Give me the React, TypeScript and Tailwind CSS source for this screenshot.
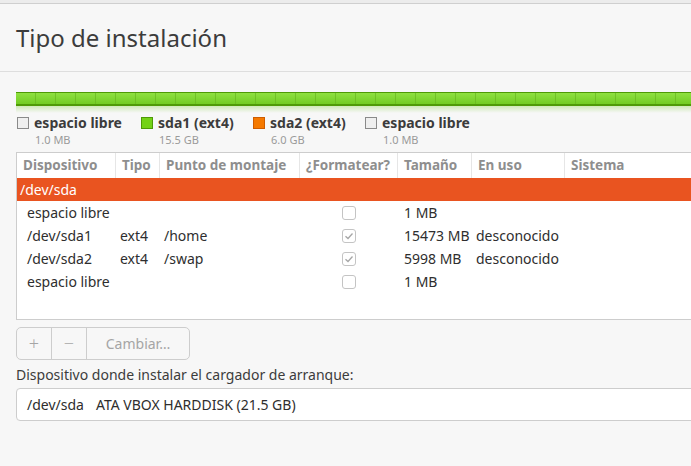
import React from 'react';

type Row = {
  dev: string;
  type?: string;
  mount?: string;
  format: boolean;
  size: string;
  used?: string;
};

const ROWS: Row[] = [
  { dev: 'espacio libre', format: false, size: '1 MB' },
  { dev: '/dev/sda1', type: 'ext4', mount: '/home', format: true, size: '15473 MB', used: 'desconocido' },
  { dev: '/dev/sda2', type: 'ext4', mount: '/swap', format: true, size: '5998 MB', used: 'desconocido' },
  { dev: 'espacio libre', format: false, size: '1 MB' },
];

const COLS = [
  { label: 'Dispositivo', w: 'w-[99px]' },
  { label: 'Tipo', w: 'w-[44px]' },
  { label: 'Punto de montaje', w: 'w-[140px]' },
  { label: '¿Formatear?', w: 'w-[98px]' },
  { label: 'Tamaño', w: 'w-[74px]' },
  { label: 'En uso', w: 'w-[93px]' },
  { label: 'Sistema', w: 'flex-1' },
];

const LEGEND = [
  { name: 'espacio libre', size: '1.0 MB', box: 'bg-[#efefef] border-[#8a8a8a]', w: 'w-[124px]' },
  { name: 'sda1 (ext4)', size: '15.5 GB', box: 'bg-[#73d216] border-[#4e9a06]', w: 'w-[112px]' },
  { name: 'sda2 (ext4)', size: '6.0 GB', box: 'bg-[#f57900] border-[#ce5c00]', w: 'w-[112px]' },
  { name: 'espacio libre', size: '1.0 MB', box: 'bg-[#efefef] border-[#8a8a8a]', w: 'w-[124px]' },
];

function Check({ checked }: { checked: boolean }) {
  return (
    <div className="w-[14px] h-[14px] rounded-[3px] border border-[#c4c4c4] bg-white flex items-center justify-center">
      {checked && (
        <svg width="10" height="10" viewBox="0 0 10 10">
          <path d="M1.5 5.2 L4 7.5 L8.5 2.5" fill="none" stroke="#a6a6a6" strokeWidth="1.3" />
        </svg>
      )}
    </div>
  );
}

const App: React.FC = () => {
  return (
    <div className="w-[691px] h-[466px] overflow-hidden bg-[#f7f7f7] text-[#333] font-['Noto_Sans',sans-serif]">
      <div className="h-[4px] bg-[#ececec] border-b border-[#cfcfcf]" />
      <div className="h-[68px] flex items-center px-4 border-b border-[#dedede]">
        <h1 className="text-[24px] text-[#3c3c3c] leading-none">Tipo de instalación</h1>
      </div>

      <div className="pl-4 w-[730px]">
        {/* partition bar */}
        <div className="mt-[20px]">
          <div className="h-[14px] border-t border-b-2 border-[#4e9a06] bg-gradient-to-b from-[#8ee03f] to-[#72cc22] flex">
            {Array.from({ length: 36 }).map((_, i) => (
              <div key={i} className="w-[20px] shrink-0 border-r border-[#62b01c]/60" />
            ))}
          </div>
          <div className="h-[7px] bg-gradient-to-b from-[#cfe9b8] to-transparent" />
        </div>

        {/* legend */}
        <div className="flex mt-[3px] pl-[1px]">
          {LEGEND.map((l, i) => (
            <div key={i} className={`${l.w} flex gap-[5px]`}>
              <div className={`w-[12px] h-[12px] mt-[1px] border ${l.box}`} />
              <div className="flex flex-col">
                <span className="text-[14px] font-bold leading-[14px] text-[#3c3c3c]">{l.name}</span>
                <span className="text-[11px] leading-[14px] mt-[3px] text-[#9a9a9a] pl-[1px]">{l.size}</span>
              </div>
            </div>
          ))}
        </div>

        {/* partition table */}
        <div className="mt-[5px] h-[168px] border border-[#cdcdcd] bg-white">
          <div className="flex h-[25px] items-center">
            {COLS.map((c, i) => (
              <div
                key={c.label}
                className={`${c.w} h-full flex items-center px-[6px] text-[13.5px] font-bold text-[#8e8e8e] ${i < COLS.length - 1 ? 'border-r border-[#e6e6e6]' : ''}`}
              >
                {c.label}
              </div>
            ))}
          </div>
          <div className="h-[23px] bg-[#e95420] text-white text-[14px] flex items-center pl-[3px]">/dev/sda</div>
          {ROWS.map((r, i) => (
            <div key={i} className="flex h-[23px] items-center text-[14px] text-[#2e2e2e]">
              <div className="w-[99px] pl-[10px]">{r.dev}</div>
              <div className="w-[44px] pl-[4px]">{r.type}</div>
              <div className="w-[140px] pl-[4px]">{r.mount}</div>
              <div className="w-[98px] flex justify-center">
                <Check checked={r.format} />
              </div>
              <div className="w-[74px] pl-[6px]">{r.size}</div>
              <div className="w-[93px] pl-[4px]">{r.used}</div>
              <div className="flex-1" />
            </div>
          ))}
        </div>

        {/* buttons */}
        <div className="mt-[7px] flex w-[174px] h-[33px] border border-[#cdcdcd] rounded-[5px] text-[#a5a5a5]">
          <div className="w-[35px] flex items-center justify-center border-r border-[#cdcdcd] text-[18px] font-light">+</div>
          <div className="w-[35px] flex items-center justify-center border-r border-[#cdcdcd] text-[18px] font-light">−</div>
          <div className="flex-1 flex items-center justify-center text-[14px]">Cambiar…</div>
        </div>

        <div className="mt-[5px] text-[14px] leading-[20px] text-[#3c3c3c]">
          Dispositivo donde instalar el cargador de arranque:
        </div>

        <div className="mt-[3px] h-[33px] border border-[#cdcdcd] rounded-[4px] bg-white flex items-center pl-[10px] text-[14px] text-[#2e2e2e]">
          <span>/dev/sda</span>
          <span className="ml-[12px]">ATA VBOX HARDDISK (21.5 GB)</span>
        </div>
      </div>
    </div>
  );
};

export default App;
